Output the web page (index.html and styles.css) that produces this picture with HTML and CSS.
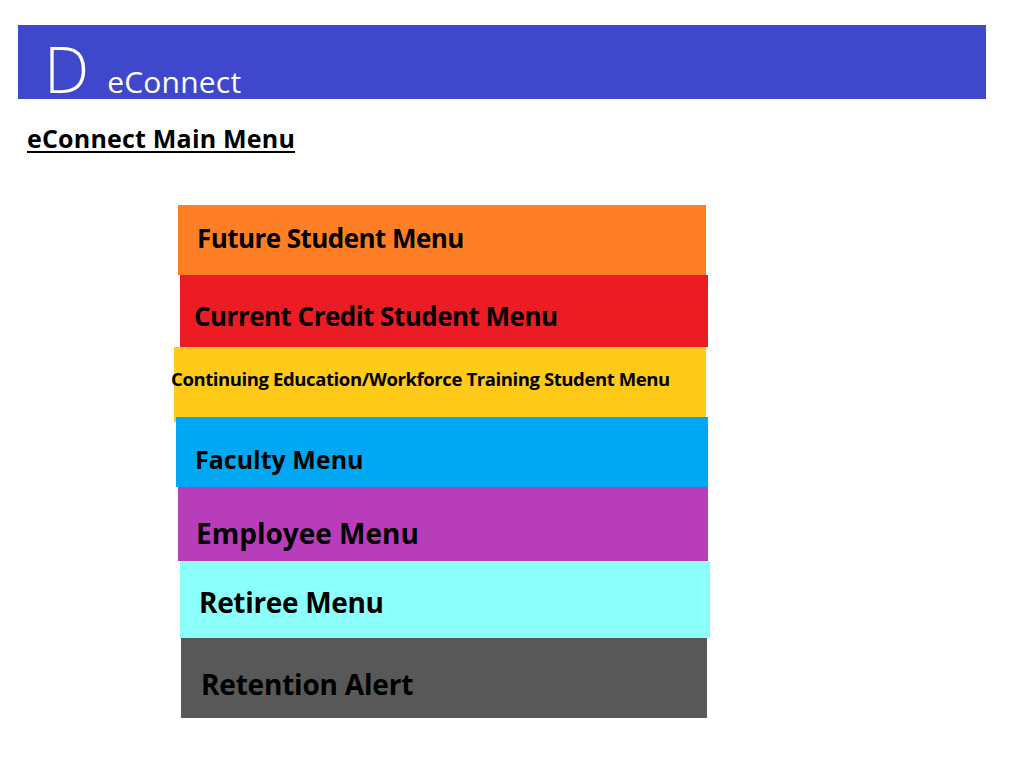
FILE: index.html
```html
<!DOCTYPE html>
<html lang="en">
<head>
<meta charset="utf-8">
<title>eConnect Main Menu</title>
<link rel="stylesheet" href="styles.css">
</head>
<body>
<header class="banner">
  <span class="banner-logo">D</span>
  <span class="banner-title">eConnect</span>
</header>
<h1 class="page-title">eConnect Main Menu</h1>
<nav class="tiles">
  <a class="tile tile-future" href="#">Future Student Menu</a>
  <a class="tile tile-current" href="#">Current Credit Student Menu</a>
  <a class="tile tile-continuing" href="#">Continuing Education/Workforce Training Student Menu</a>
  <a class="tile tile-faculty" href="#">Faculty Menu</a>
  <a class="tile tile-employee" href="#">Employee Menu</a>
  <a class="tile tile-retiree" href="#">Retiree Menu</a>
  <a class="tile tile-retention" href="#">Retention Alert</a>
</nav>
</body>
</html>
```

FILE: styles.css
```css
* { box-sizing: border-box; }

html, body {
  margin: 0;
  padding: 0;
  background: #ffffff;
}

body {
  font-family: "Open Sans", "Noto Sans", "Liberation Sans", sans-serif;
  color: #000000;
}

.banner {
  margin: 25px 0 0 18px;
  width: 968px;
  height: 74px;
  background: #3f48cc;
  color: #ffffff;
  display: flex;
  align-items: baseline;
  padding: 12px 0 0 26px;
  line-height: 1;
}

.banner-logo {
  font-size: 64px;
  font-weight: 300;
  letter-spacing: 0;
}

.banner-title {
  font-size: 30px;
  font-weight: 400;
  margin-left: 18px;
  letter-spacing: 0.2px;
}

.page-title {
  margin: 27px 0 0 27px;
  font-size: 25px;
  font-weight: 700;
  line-height: 1;
  letter-spacing: 0.2px;
  text-decoration: underline;
  text-decoration-thickness: 2px;
  text-underline-offset: 3px;
}

.tiles {
  margin-top: 54px;
  display: flex;
  flex-direction: column;
  align-items: flex-start;
}

.tile {
  display: block;
  color: #000000;
  text-decoration: none;
  font-weight: 700;
  line-height: 1;
  white-space: nowrap;
  padding-left: 18px;
}

.tile-future {
  margin-left: 178px;
  width: 528px;
  height: 70px;
  background: #ff7f27;
  font-size: 26px;
  letter-spacing: -0.55px;
  padding-top: 20px;
  padding-left: 19px;
}

.tile-current {
  margin-left: 180px;
  width: 528px;
  height: 72px;
  background: #ec1c24;
  font-size: 26px;
  letter-spacing: -0.52px;
  padding-top: 28px;
  padding-left: 14px;
}

.tile-continuing {
  margin-left: 174px;
  width: 532px;
  height: 75px;
  background: #ffca18;
  font-size: 18.5px;
  letter-spacing: -0.4px;
  padding-top: 23px;
  padding-left: 0;
  text-indent: -3px;
}

.tile-faculty {
  position: relative;
  margin-top: -5px;
  margin-left: 176px;
  width: 532px;
  height: 70px;
  background: #00a8f3;
  font-size: 25px;
  padding-top: 30px;
  padding-left: 19px;
}

.tile-employee {
  margin-left: 178px;
  width: 530px;
  height: 74px;
  background: #b83dba;
  font-size: 28px;
  padding-top: 32px;
}

.tile-retiree {
  margin-left: 180px;
  width: 530px;
  height: 77px;
  background: #8cfffb;
  font-size: 28px;
  letter-spacing: -0.33px;
  padding-top: 27px;
  padding-left: 19px;
}

.tile-retention {
  margin-left: 181px;
  width: 526px;
  height: 80px;
  background: #585858;
  font-size: 28px;
  letter-spacing: -0.2px;
  padding-top: 32px;
  padding-left: 20px;
}
```
